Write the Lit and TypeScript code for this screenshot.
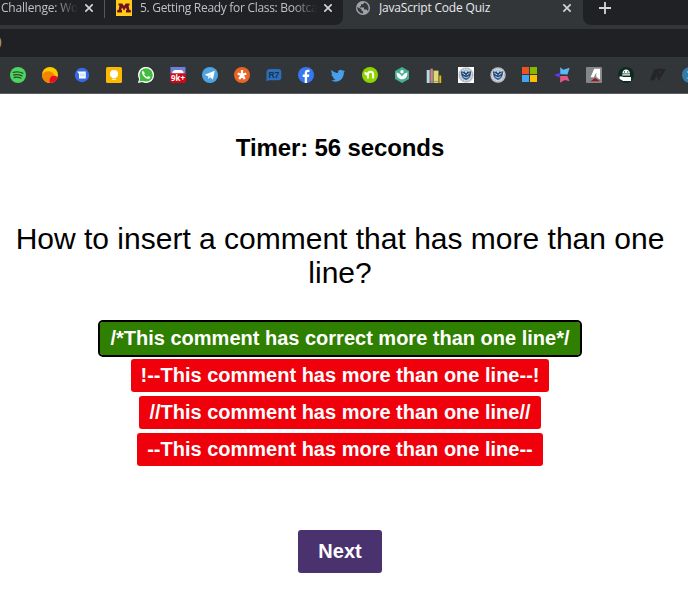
import { LitElement, html, css, svg } from "lit";
import { customElement, property } from "lit/decorators.js";

const seal = svg`
  <circle cx="8" cy="8" r="7.700" fill="#c3c9d2"/>
  <circle cx="8" cy="8" r="6.500" fill="#d5dae1" stroke="#a58f9f" stroke-width=".7" stroke-dasharray="1.400 1"/>
  <circle cx="8" cy="8" r="5.200" fill="#9dbfd6"/>
  <path d="M2.900 4.200L5.800 5 8 4l2.200 1 2.900-.8-.4 3.600-1.500 3L8 13l-3.200-2.200-1.500-3z" fill="#244b7a"/>
  <path d="M4.300 6l3 2M11.700 6l-3 2M5.300 9.500L8 11l2.700-1.500" stroke="#d5e0ec" stroke-width=".9" fill="none"/><path d="M7.200 4h1.600v1.800H7.200z" fill="#f4f6f8"/>`;

const bookmarks = [
  svg`<circle cx="8" cy="8" r="8" fill="#4fd45f"/><path d="M3.200 5.300c3.500-.9 6.800-.6 9.700 1M3.700 8c3-.8 5.900-.5 8.300.9M4.200 10.500c2.600-.6 4.800-.3 6.800.8" fill="none" stroke="#27512f" stroke-width="1.300" stroke-linecap="round"/>`,
  svg`<circle cx="8" cy="8" r="8" fill="#ffcb00"/><path d="M0 8a8 8 0 0 0 8 8 8 8 0 0 0 6.500-3.500L11 6C7 3 2 3.800 0 8z" fill="#f48400"/><path d="M8 16c-1.600-5 2-9.500 7.700-6A8 8 0 0 1 8 16z" fill="#ee0b25"/>`,
  svg`<circle cx="8" cy="8" r="7.200" fill="#376be5"/><path d="M3.200 4.600h8.600v6.800H5V7z" fill="#fff"/><path d="M6.200 6.300h4.500v3.400H6.200z" fill="#dce8ff"/><path d="M6.300 8h4.200" stroke="#c1d5ff" stroke-width=".8"/>`,
  svg`<rect width="16" height="16" rx="1.600" fill="#fbb900"/><circle cx="8" cy="6.900" r="4" fill="#fff"/><path d="M6 9h4v2H6zM6 11.700h4v1.100H6z" fill="#fff"/>`,
  svg`<path d="M0 16l1.100-4.100A8 8 0 1 1 4.300 15z" fill="#fff"/><circle cx="8.100" cy="7.900" r="6.700" fill="#40bd3c"/><path d="M2.400 10.300L1.500 14.500l4-.8z" fill="#40bd3c"/><path d="M5 3.800c-1 .5-1.300 1.700-.8 3 .8 2.300 2.700 4.300 5 5 1.500.5 2.900-.2 3.100-1.800L10.200 8.900l-1 1.200C7.800 9.500 6.800 8.500 6.100 7.200l.8-1z" fill="#fff"/>`,
  svg`<rect x=".5" width="15" height="9" fill="#7180d7"/><path d="M3 4l2-1h6l2 1 1 3H2z" fill="#fff"/><rect y="6.200" width="16" height="9.800" rx="2.200" fill="#cf0917"/><text x="8" y="14" text-anchor="middle" textLength="14" lengthAdjust="spacingAndGlyphs" class="count">9k+</text>`,
  svg`<circle cx="8" cy="8" r="8" fill="#4ea4e3"/><path d="M2.700 7.800L12.800 3.700 10.900 12.500 8 10.300 6.300 12 6.100 9.200z" fill="#fff"/><path d="M6.200 9.200l4.400-3.500L7.400 10l-1 1.500z" fill="#c4e3f7"/>`,
  svg`<circle cx="8" cy="8" r="8" fill="#e96525"/><path d="M8 3v5L3.700 6.600M8 8L5.200 12M8 8l2.800 4M8 8l4.300-1.400" stroke="#fff" stroke-width="2.200" fill="none"/>`,
  svg`<path d="M4 2h8.400q2.900 0 2.900 2.900v5.600q0 2.800-2.900 2.800H3.200L.5 14.300V5.400Q.5 2 4 2z" fill="#2c6fbd"/><text x="7.900" y="11.400" text-anchor="middle" textLength="11" lengthAdjust="spacingAndGlyphs" class="seven">R7</text>`,
  svg`<circle cx="8" cy="8" r="8" fill="#3578ef"/><path d="M6.700 16V10H4.700V7.600h2V6c0-2.100 1.200-3.300 3.200-3.300h1.500v2.200h-1.100c-.9 0-1.200.5-1.200 1.200v1.500h2.300L11 10H9.100v6z" fill="#fff"/>`,
  svg`<path d="M15 3.900l-1.600.6 1-1.400-1.800.6C10.600 1.700 7.700 3 8 5.900 5.600 5.800 3.400 4.700 1.700 2.900.8 4.700 1.500 6.500 2.700 7.300L1.500 7C1.500 8.800 2.600 9.900 4 10.300H2.800c.4 1.300 1.500 2 2.800 2C4 13.300 2.500 13.500 1 13.500c6.200 3.200 13-.5 12.800-8z" fill="#48a0ed"/>`,
  svg`<circle cx="8" cy="8" r="8" fill="#8ed500"/><path d="M3.300 5.200q.2 2.500 2.600 2.900M5.900 11.500V7.600c0-3.700 5.200-3.700 5.200 0v3.900" stroke="#fff" stroke-width="2" fill="none"/>`,
  svg`<path d="M8 0l7 4v8l-7 4-7-4V4z" fill="#49ae90"/><circle cx="8" cy="4.800" r="1.700" fill="#fff"/><path d="M2.600 5.500C4.800 6 6.800 7.300 8 9.400 9.200 7.300 11.200 6 13.400 5.500 13.600 9.500 11.500 12.300 8 12.300S2.400 9.500 2.600 5.500z" fill="#fff"/>`,
  svg`<path d="M.7 3h3v13h-3z" fill="#b6dae4"/><path d="M4.300 1.700h2.600V16H4.300z" fill="#cb858a"/><path d="M7.500 3.600h5V16h-5z" fill="#d8dc73"/><path d="M13.300 8.500h1.900V16h-1.900z" fill="#efb900"/><path d="M4.300 14.500h2.600M7.500 14.500h5" stroke="#777" stroke-width=".6"/>`,
  svg`<path d="M0 0h16v16H0z" fill="#fff"/>${seal}`,
  seal,
  svg`<path d="M0 0h7v7H0z" fill="#ef5123"/><path d="M8 0h7v7H8z" fill="#84b900"/><path d="M0 8h7v7H0z" fill="#40a4ef"/><path d="M8 8h7v7H8z" fill="#ffbd00"/>`,
  svg`<path d="M6.200.2l3.100 2.500L15.600.8 13.500 7.500 6.300 7.300z" fill="#5bb9f4"/><path d="M.2 8l5.600-2.300V10.500z" fill="#6834f2"/><path d="M6.200 8.900h7.200l2.200 5.400-4.800-1.200L6 15.800z" fill="#df5687"/>`,
  svg`<rect width="16" height="16" rx="1" fill="#85868a"/><path d="M4.600 10.200L8.200 1.800h5.900v10.800L10.300 10V5.600L7.900 10.200z" fill="#fff"/><path d="M4.500 14.200L9 11l5 3.200z" fill="#9b171b"/>`,
  svg`<circle cx="8" cy="8" r="8" fill="#0c2c20"/><path d="M4.400 6.500C4.500 1.300 11.700 1.300 11.900 6.500z" fill="#fff"/><path d="M4.300 7.200h7.700v1.400H4.300zM1.400 9.500h3l1 .6h7.600v3.900H5.200L1.700 12z" fill="#fff"/><circle cx="6.500" cy="4.900" r=".7" fill="#0c2c20"/><circle cx="9.700" cy="4.900" r=".7" fill="#0c2c20"/>`,
  svg`<path d="M4.100 2.500L10.500 1.600l5.400 1-5.400 8.200-2.500 4 .3-5-2.600.7-1.700 3L0 13z" fill="#242526"/><path d="M9 4.500L11.500 4l-2 3.500z" fill="#323639"/><path d="M6 8l1-1 .5 2z" fill="#65282b"/>`,
  svg`<circle cx="8" cy="8" r="8" fill="#347ca7"/><path d="M7 3L5 5l3 2-3 5" stroke="#74b4d5" fill="none"/>`,
];

@customElement("browser-tab")
class BrowserTab extends LitElement {
  @property() label = "";
  static styles = css`
    :host { display: flex; box-sizing: border-box; height: 25px; align-items: flex-start; color: #bdc1c6; font: 12px/16px "Open Sans", sans-serif; letter-spacing: -0.19px; white-space: nowrap; min-width: 0; }
    .label { flex: 1; min-width: 0; margin-right: 7px; overflow: hidden; -webkit-mask-image: linear-gradient(to right, #000 calc(100% - 24px), transparent); mask-image: linear-gradient(to right, #000 calc(100% - 24px), transparent); }
    :host([active]) .label { color: #e9eaed; -webkit-mask-image: none; mask-image: none; }
    .close { width: 8px; height: 8px; margin: 4px 0 0; flex: none; }
    .close path { stroke: #d1d3d6; stroke-width: 1.7; }
  `;
  render() {
    return html`<slot name="icon"></slot><span class="label">${this.label}</span>
      <svg class="close" viewBox="0 0 8 8"><path d="M.3.3l7.400 7.400M7.700.3L.3 7.700"/></svg>`;
  }
}

@customElement("app-root")
class AppRoot extends LitElement {
  static styles = css`
    :host { display: block; height: 615px; overflow: hidden; background: #fff; color: #000; font-family: "Liberation Sans", Arial, sans-serif; }
    .tabs { display: flex; height: 25px; background: #323639; }
    browser-tab { background: #202124; }
    .first { width: 104px; padding: 0 11px 0 1px; }
    .second { width: 239px; padding: 0 11px 0 11px; border-bottom-right-radius: 8px; border-left: 1px solid #202124; letter-spacing: -0.3px; }
    .divider { width: 1px; height: 18px; background: #55575b; margin-right: -1px; z-index: 1; }
    .active { width: 240px; padding: 0 12px 0 13px; background: #323639; }
    .rest { flex: 1; background: #202124; border-bottom-left-radius: 8px; padding: 2px 0 0 16px; box-sizing: border-box; }
    .plus { display: block; width: 12px; height: 12px; }
    .logo { width: 16px; height: 16px; margin-right: 8px; flex: none; }
    .globe { width: 14px; height: 14px; margin: 1px 9px 0 0; flex: none; }
    .address { height: 28px; border-top: 4px solid #323639; background: #202124; overflow: hidden; color: #b9ae98; font: 12px/26px "Open Sans", sans-serif; }
    .address span { margin-left: -2px; }
    .bookmarks { display: flex; gap: 16px; box-sizing: border-box; height: 37px; padding: 10px 0 0 10px; overflow: hidden; background: #323639; border-bottom: 1px solid #5b5d60; }
    .bookmarks svg { width: 16px; height: 16px; flex: none; }
    .count { fill: #fff; font: bold 9px "Open Sans", sans-serif; }
    .seven { fill: #1d3247; font: bold 9.5px "Liberation Sans", sans-serif; }
    .quiz { display: flex; flex-direction: column; align-items: center; width: 680px; padding-top: 40px; }
    .timer { margin: 0; font: bold 24px/28px "Liberation Sans", Arial, sans-serif; letter-spacing: -0.12px; }
    .question { margin: 60px 8px 32px; font-size: 30px; line-height: 34px; text-align: center; }
    .options { display: flex; flex-direction: column; align-items: center; gap: 4px; }
    button { border: 0; margin: 0; font: bold 20px/23px "Liberation Sans", Arial, sans-serif; color: #fff; border-radius: 3px; white-space: nowrap; }
    .option { padding: 5px 10px; background: #ef000b; }
    .right { background: #2f7f00; outline: 2px solid #000; }
    .next { margin-top: 64px; padding: 10px 20px; background: #4a326f; }
  `;
  render() {
    return html`
      <div class="tabs">
        <browser-tab class="first" label="Challenge: Work"></browser-tab>
        <div class="divider"></div>
        <browser-tab class="second" label="5. Getting Ready for Class: Bootcamp">
          <svg slot="icon" class="logo" viewBox="0 0 16 16"><path d="M0 0h16v16H0z" fill="#ffcc18"/><path d="M2.500 3.500h3.700L8 6l1.800-2.500h3.700v2h-1l1 4.500h1.300v2.500H10V10h.8L10 7.500l-2 3-2-3L5.200 10H6v2.500H1.200V10h1.300l1-4.500h-1z" fill="#710d24"/></svg>
        </browser-tab>
        <browser-tab class="active" active label="JavaScript Code Quiz">
          <svg slot="icon" class="globe" viewBox="0 0 14 14"><circle cx="7" cy="7" r="7" fill="#a0a4aa"/><path d="M1.300 6L5.500 8.200v1.400l1.600 1V12.500C3.500 12.500 1 9.500 1.300 6zM8.500 1.500L7 3.200H5v2H3.800v1.300H8v2h2.500L12 10c1.500-3.500-.2-7.500-3.500-8.500z" fill="#34373b"/></svg>
        </browser-tab>
        <div class="rest"><svg class="plus" viewBox="0 0 12 12"><path d="M6 0v12M0 6h12" stroke="#d3d5d8" stroke-width="1.800"/></svg></div>
      </div>
      <div class="address"><span>)</span></div>
      <div class="bookmarks">${bookmarks.map((b) => html`<svg viewBox="0 0 16 16">${b}</svg>`)}</div>
      <main class="quiz">
        <h2 class="timer">Timer: 56 seconds</h2>
        <div class="question">How to insert a comment that has more than one line?</div>
        <div class="options">
          <button class="option right">/*This comment has correct more than one line*/</button>
          <button class="option">!--This comment has more than one line--!</button>
          <button class="option">//This comment has more than one line//</button>
          <button class="option">--This comment has more than one line--</button>
        </div>
        <button class="next">Next</button>
      </main>`;
  }
}
